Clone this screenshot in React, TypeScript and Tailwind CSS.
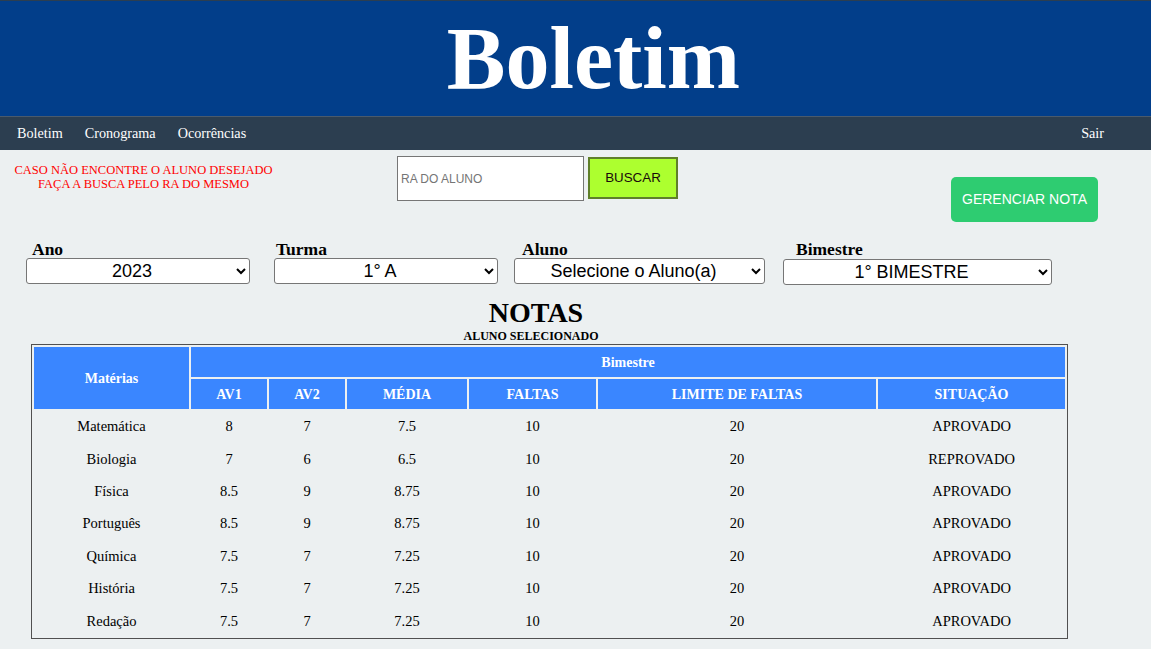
import { useState } from 'react'

const notas = [
  { materia: 'Matemática', av1: '8', av2: '7', media: '7.5', faltas: '10', limite: '20', situacao: 'APROVADO' },
  { materia: 'Biologia', av1: '7', av2: '6', media: '6.5', faltas: '10', limite: '20', situacao: 'REPROVADO' },
  { materia: 'Física', av1: '8.5', av2: '9', media: '8.75', faltas: '10', limite: '20', situacao: 'APROVADO' },
  { materia: 'Português', av1: '8.5', av2: '9', media: '8.75', faltas: '10', limite: '20', situacao: 'APROVADO' },
  { materia: 'Química', av1: '7.5', av2: '7', media: '7.25', faltas: '10', limite: '20', situacao: 'APROVADO' },
  { materia: 'História', av1: '7.5', av2: '7', media: '7.25', faltas: '10', limite: '20', situacao: 'APROVADO' },
  { materia: 'Redação', av1: '7.5', av2: '7', media: '7.25', faltas: '10', limite: '20', situacao: 'APROVADO' },
]

const selectCls =
  "h-[26px] rounded-[3px] border border-[#767676] bg-white font-['Liberation_Sans',Arial,sans-serif] text-[18px] font-normal text-black text-center [text-align-last:center]"

const labelCls = 'text-[17.5px] font-bold leading-[17px]'

export default function App() {
  const [ra, setRa] = useState('')

  return (
    <div className="min-h-screen bg-[#ecf0f1] font-['Liberation_Serif','Times_New_Roman',serif] text-black">
      <header className="flex h-[116px] items-center justify-center border-t border-[#2c3e50] bg-[#023e8a] pl-[36px]">
        <h1 className="text-[88px] font-bold leading-none text-white">Boletim</h1>
      </header>

      <nav className="flex h-[34px] items-center justify-between border-t border-[#4a5a6c] bg-[#2c3e50] text-[14.2px] text-white">
        <ul className="ml-[17px] flex gap-[22px]">
          <li>Boletim</li>
          <li>Cronograma</li>
          <li>Ocorrências</li>
        </ul>
        <span className="mr-[47px]">Sair</span>
      </nav>

      <div className="flex h-[91px] items-start">
        <p className="ml-[13px] mt-[13px] w-[261px] text-center text-[12.5px] leading-[14px] text-[#ff0000]">
          CASO NÃO ENCONTRE O ALUNO DESEJADO
          <br />
          FAÇA A BUSCA PELO RA DO MESMO
        </p>
        <input
          value={ra}
          onChange={(e) => setRa(e.target.value)}
          placeholder="RA DO ALUNO"
          className="ml-[123px] mt-[6px] h-[45px] w-[187px] border border-[#767676] bg-white px-[3px] font-['Liberation_Sans',Arial,sans-serif] text-[12px] placeholder:text-[#757575]"
        />
        <button
          type="button"
          className="ml-[4px] mt-[7px] h-[42px] w-[90px] border-2 border-[#5f7f2a] bg-[#adff2f] font-['Liberation_Sans',Arial,sans-serif] text-[13.33px] text-[#1a0a0a]"
        >
          BUSCAR
        </button>
        <button
          type="button"
          className="ml-[273px] mt-[27px] h-[45px] w-[147px] rounded-[5px] bg-[#2ecc71] font-['Liberation_Sans',Arial,sans-serif] text-[14px] text-white"
        >
          GERENCIAR NOTA
        </button>
      </div>

      <div className="ml-[26px] flex h-[44px] items-start">
        <div className="flex flex-col">
          <label className={`${labelCls} pl-[6px]`}>Ano</label>
          <select className={`${selectCls} w-[224px]`} defaultValue="2023">
            <option>2023</option>
            <option>2022</option>
          </select>
        </div>
        <div className="ml-[24px] flex flex-col">
          <label className={`${labelCls} pl-[2px]`}>Turma</label>
          <select className={`${selectCls} w-[224px]`} defaultValue="1° A">
            <option>1° A</option>
            <option>1° B</option>
          </select>
        </div>
        <div className="ml-[16px] flex flex-col">
          <label className={`${labelCls} pl-[8px]`}>Aluno</label>
          <select className={`${selectCls} w-[251px]`}>
            <option>Selecione o Aluno(a)</option>
          </select>
        </div>
        <div className="ml-[18px] flex flex-col">
          <label className={`${labelCls} pl-[13px]`}>Bimestre</label>
          <select className={`${selectCls} mt-px w-[269px]`}>
            <option>1° BIMESTRE</option>
            <option>2° BIMESTRE</option>
          </select>
        </div>
      </div>

      <div className="w-[1072px] text-center">
        <h2 className="mt-[12px] text-[28px] font-bold leading-[32px]">NOTAS</h2>
        <p className="pr-[10px] text-[12px] font-bold leading-[14px]">ALUNO SELECIONADO</p>
      </div>

      <table className="ml-[31px] mt-px w-[1037px] table-fixed border-separate border-spacing-[2px] border border-[#505050]">
        <colgroup>
          <col className="w-[155px]" />
          <col className="w-[76px]" />
          <col className="w-[76px]" />
          <col className="w-[120px]" />
          <col className="w-[127px]" />
          <col className="w-[278px]" />
          <col className="w-[187px]" />
        </colgroup>
        <thead className="text-[14px] font-bold text-white">
          <tr className="h-[30px]">
            <th rowSpan={2} className="bg-[#3a86ff]">
              Matérias
            </th>
            <th colSpan={6} className="bg-[#3a86ff]">
              Bimestre
            </th>
          </tr>
          <tr className="h-[30px]">
            <th className="bg-[#3a86ff]">AV1</th>
            <th className="bg-[#3a86ff]">AV2</th>
            <th className="bg-[#3a86ff]">MÉDIA</th>
            <th className="bg-[#3a86ff]">FALTAS</th>
            <th className="bg-[#3a86ff]">LIMITE DE FALTAS</th>
            <th className="bg-[#3a86ff]">SITUAÇÃO</th>
          </tr>
        </thead>
        <tbody className="text-center text-[14.5px]">
          {notas.map((n) => (
            <tr key={n.materia} className="h-[30.4px]">
              <td className="pt-[2px]">{n.materia}</td>
              <td className="pt-[2px]">{n.av1}</td>
              <td className="pt-[2px]">{n.av2}</td>
              <td className="pt-[2px]">{n.media}</td>
              <td className="pt-[2px]">{n.faltas}</td>
              <td className="pt-[2px]">{n.limite}</td>
              <td className="pt-[2px]">{n.situacao}</td>
            </tr>
          ))}
        </tbody>
      </table>
    </div>
  )
}
